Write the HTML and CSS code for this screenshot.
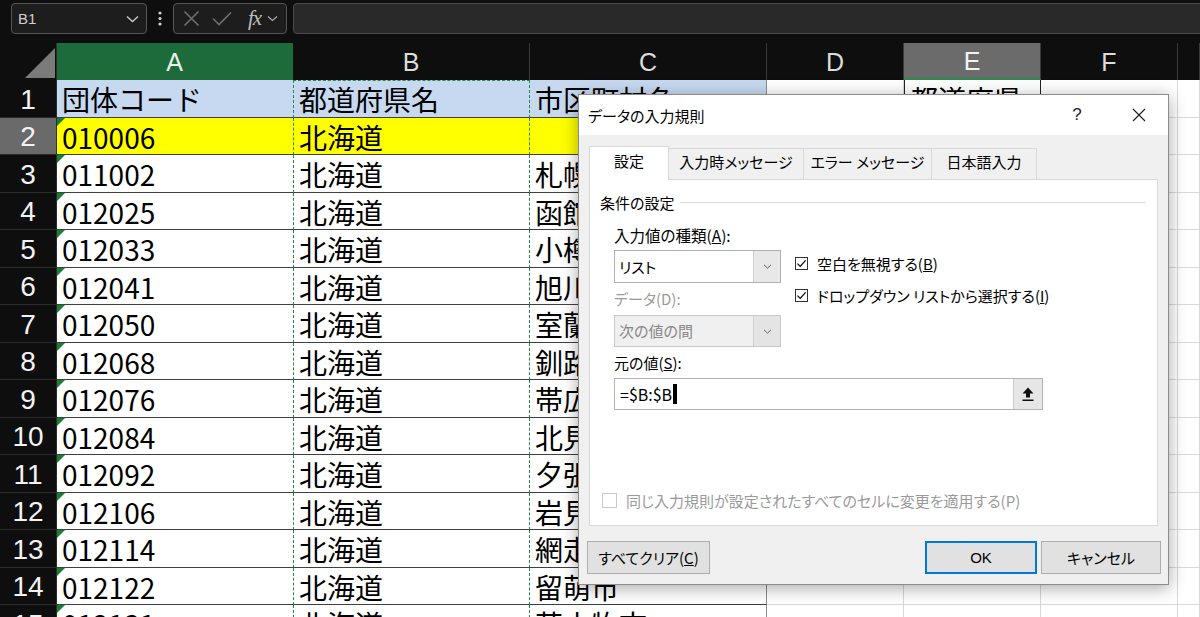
FILE: index.html
```
<!DOCTYPE html>
<html lang="ja">
<head>
<meta charset="utf-8">
<title>データの入力規則</title>
<link rel="stylesheet" href="styles.css">
</head>
<body>
<div class="topbar">
  <div class="namebox">
    <span>B1</span>
    <svg width="13" height="8" viewBox="0 0 13 8"><path d="M1 1.5 6.5 6.5 12 1.5" fill="none" stroke="#c8c8c8" stroke-width="1.4"/></svg>
  </div>
  <div class="dots"><svg width="4" height="15" viewBox="0 0 4 15"><circle cx="2" cy="2" r="1.6" fill="#cfcfcf"/><circle cx="2" cy="7.5" r="1.6" fill="#cfcfcf"/><circle cx="2" cy="13" r="1.6" fill="#cfcfcf"/></svg></div>
  <div class="fxbox">
    <svg width="17" height="17" viewBox="0 0 17 17"><path d="M1.5 1.5 15.5 15.5 M15.5 1.5 1.5 15.5" stroke="#6e6e6e" stroke-width="1.6"/></svg>
    <svg width="20" height="15" viewBox="0 0 20 15"><path d="M1 7.5 7 13.5 19 1.5" fill="none" stroke="#6e6e6e" stroke-width="1.6"/></svg>
    <span class="fx">fx</span>
    <svg width="11" height="7" viewBox="0 0 11 7"><path d="M1 1.5 5.5 5.5 10 1.5" fill="none" stroke="#a8a8a8" stroke-width="1.3"/></svg>
  </div>
  <div class="formula"></div>
</div>

<div class="sheet">
  <div class="corner"><i></i></div><div class="ch ch-a">A</div><div class="ch">B</div><div class="ch">C</div><div class="ch">D</div><div class="ch ch-e">E</div><div class="ch">F</div><div class="ch"></div>

  <div class="rh">1</div><div class="c t a blue">団体コード</div><div class="c t b blue top">都道府県名</div><div class="c t cc blue">市区町村名</div><div class="c"></div><div class="c e1">都道府県</div><div class="c"></div><div class="c"></div>
  <div class="rh on">2</div><div class="c t a yel mk">010006</div><div class="c t b yel">北海道</div><div class="c t cc yel"></div><div class="c"></div><div class="c"></div><div class="c"></div><div class="c"></div>
  <div class="rh">3</div><div class="c t a mk">011002</div><div class="c t b">北海道</div><div class="c t cc">札幌市</div><div class="c"></div><div class="c"></div><div class="c"></div><div class="c"></div>
  <div class="rh">4</div><div class="c t a mk">012025</div><div class="c t b">北海道</div><div class="c t cc">函館市</div><div class="c"></div><div class="c"></div><div class="c"></div><div class="c"></div>
  <div class="rh">5</div><div class="c t a mk">012033</div><div class="c t b">北海道</div><div class="c t cc">小樽市</div><div class="c"></div><div class="c"></div><div class="c"></div><div class="c"></div>
  <div class="rh">6</div><div class="c t a mk">012041</div><div class="c t b">北海道</div><div class="c t cc">旭川市</div><div class="c"></div><div class="c"></div><div class="c"></div><div class="c"></div>
  <div class="rh">7</div><div class="c t a mk">012050</div><div class="c t b">北海道</div><div class="c t cc">室蘭市</div><div class="c"></div><div class="c"></div><div class="c"></div><div class="c"></div>
  <div class="rh">8</div><div class="c t a mk">012068</div><div class="c t b">北海道</div><div class="c t cc">釧路市</div><div class="c"></div><div class="c"></div><div class="c"></div><div class="c"></div>
  <div class="rh">9</div><div class="c t a mk">012076</div><div class="c t b">北海道</div><div class="c t cc">帯広市</div><div class="c"></div><div class="c"></div><div class="c"></div><div class="c"></div>
  <div class="rh">10</div><div class="c t a mk">012084</div><div class="c t b">北海道</div><div class="c t cc">北見市</div><div class="c"></div><div class="c"></div><div class="c"></div><div class="c"></div>
  <div class="rh">11</div><div class="c t a mk">012092</div><div class="c t b">北海道</div><div class="c t cc">夕張市</div><div class="c"></div><div class="c"></div><div class="c"></div><div class="c"></div>
  <div class="rh">12</div><div class="c t a mk">012106</div><div class="c t b">北海道</div><div class="c t cc">岩見沢市</div><div class="c"></div><div class="c"></div><div class="c"></div><div class="c"></div>
  <div class="rh">13</div><div class="c t a mk">012114</div><div class="c t b">北海道</div><div class="c t cc">網走市</div><div class="c"></div><div class="c"></div><div class="c"></div><div class="c"></div>
  <div class="rh">14</div><div class="c t a mk">012122</div><div class="c t b">北海道</div><div class="c t cc">留萌市</div><div class="c"></div><div class="c"></div><div class="c"></div><div class="c"></div>
  <div class="rh">15</div><div class="c t a mk">012131</div><div class="c t b">北海道</div><div class="c t cc">苫小牧市</div><div class="c"></div><div class="c"></div><div class="c"></div><div class="c"></div>
</div>

<div class="dialog">
  <div class="dtitle">
    <span class="dname">データの入力規則</span>
    <span class="dhelp">?</span>
    <span class="dclose"><svg width="14" height="14" viewBox="0 0 14 14"><path d="M1 1 13 13 M13 1 1 13" stroke="#1a1a1a" stroke-width="1.1"/></svg></span>
  </div>
  <div class="tabs">
    <div class="tab on">設定</div>
    <div class="tab w1">入力時メッセージ</div>
    <div class="tab w2">エラー メッセージ</div>
    <div class="tab w3">日本語入力</div>
  </div>
  <div class="panel">
    <div class="group"><span>条件の設定</span><i></i></div>
    <div class="form">
      <div class="lbl first">入力値の種類(<u>A</u>):</div>
      <div class="pair">
        <div class="leftcol">
          <div class="select"><span>リスト</span><b><svg width="9" height="5" viewBox="0 0 9 5"><path d="M1 .8 4.5 4.2 8 .8" fill="none" stroke="#555" stroke-width="1"/></svg></b></div>
          <div class="lbl off sp">データ(D):</div>
          <div class="select dis sp2"><span>次の値の間</span><b><svg width="9" height="5" viewBox="0 0 9 5"><path d="M1 .8 4.5 4.2 8 .8" fill="none" stroke="#666" stroke-width="1"/></svg></b></div>
        </div>
        <div class="rightcol">
          <div class="chk"><span class="box"><svg width="11" height="11" viewBox="0 0 11 11"><path d="M1.5 5.6 4.2 8.4 9.6 2.4" fill="none" stroke="#000" stroke-width="1.2"/></svg></span>空白を無視する(<u>B</u>)</div>
          <div class="chk second"><span class="box"><svg width="11" height="11" viewBox="0 0 11 11"><path d="M1.5 5.6 4.2 8.4 9.6 2.4" fill="none" stroke="#000" stroke-width="1.2"/></svg></span>ドロップダウン リストから選択する(<u>I</u>)</div>
        </div>
      </div>
      <div class="lbl sp">元の値(<u>S</u>):</div>
      <div class="source">
        <span class="val">=$B:$B</span><span class="caret"></span>
        <b><svg width="14" height="16" viewBox="0 0 14 16"><path d="M7 1.5 12.5 7.5 H9 V11.5 H5 V7.5 H1.5 Z" fill="#111"/><rect x="1.5" y="13.5" width="11" height="1.5" fill="#111"/></svg></b>
      </div>
    </div>
    <div class="chk off apply"><span class="box"></span>同じ入力規則が設定されたすべてのセルに変更を適用する(P)</div>
  </div>
  <div class="footer">
    <div class="btn clear">すべてクリア(<u>C</u>)</div>
    <div class="btn ok">OK</div>
    <div class="btn cancel">キャンセル</div>
  </div>
</div>
</body>
</html>
```

FILE: styles.css
```
html,body{margin:0;padding:0;}
body{width:1200px;height:617px;overflow:hidden;position:relative;background:#0e0e0e;font-family:"Noto Sans CJK JP","Liberation Sans",sans-serif;}

/* formula bar */
.topbar{height:43px;box-sizing:border-box;padding-top:3px;display:flex;align-items:flex-start;}
.namebox{margin-left:11px;width:136px;height:31px;box-sizing:border-box;border:1px solid #555;border-radius:4px;background:#1d1d1d;display:flex;align-items:center;justify-content:space-between;padding:0 7px 0 6px;}
.namebox span{font:15px "Liberation Sans",sans-serif;color:#cfcfcf;}
.dots{width:26px;height:31px;display:flex;align-items:center;justify-content:center;}
.fxbox{width:114px;height:31px;box-sizing:border-box;border:1px solid #555;border-radius:4px;background:#1d1d1d;display:flex;align-items:center;padding-left:9px;}
.fxbox svg:nth-child(2){margin-left:12px;}
.fx{margin-left:16px;font:italic 21px "Liberation Serif",serif;color:#bdbdbd;letter-spacing:-1px;line-height:1;}
.fxbox svg:last-child{margin-left:6px;}
.formula{margin-left:6px;flex:1;margin-right:-10px;height:31px;box-sizing:border-box;border:1px solid #4a4a4a;border-radius:4px;background:#292929;}

/* sheet */
.sheet{display:grid;grid-template-columns:57px 236px 237px 237px 137px 137px 137px 1fr;grid-template-rows:37px;grid-auto-rows:37.5px;}
.corner{background:#0e0e0e;border-right:1px solid #2e2e2e;position:relative;}
.corner i{position:absolute;left:25px;top:5px;width:30px;height:30px;background:#7b7b7b;clip-path:polygon(100% 0,100% 100%,0 100%);}
.ch{background:#0e0e0e;color:#dcdcdc;font:25px "Liberation Sans",sans-serif;display:flex;align-items:center;justify-content:center;border-right:1px solid #3a3a3a;padding-top:2px;box-sizing:border-box;}
.ch-a{background:#1d6b3b;color:#e6f3e8;border-right-color:#1d6b3b;}
.ch-e{background:#6b6b6b;color:#f2f2f2;border-bottom:2px solid #2a8a4f;}
.rh{background:#0e0e0e;color:#f2f2f2;font:28px "Liberation Sans",sans-serif;display:flex;align-items:center;justify-content:center;border-bottom:1px solid #2c2c2c;border-right:1px solid #2c2c2c;padding-top:3px;box-sizing:border-box;}
.rh.on{background:#6a6a6a;}

.c{background:#fff;border-right:1px solid #d9d9d9;border-bottom:1px solid #d9d9d9;padding:1px 0 0 5px;font-size:28px;line-height:36px;white-space:nowrap;overflow:hidden;position:relative;color:#000;}
.t{border-bottom-color:#404040;}
.a{border-right:none;}
.b{border-left:1px dashed #23894a;border-right:1px dashed #23894a;}
.b.top{border-top:1px dashed #23894a;padding-top:0;}
.cc{border-right-color:#8c8c8c;}
.blue{background:#c6d9f0;}
.yel{background:#ffff00;}
.mk::before{content:"";position:absolute;top:0;left:0;border-top:8px solid #1b7d34;border-right:8px solid transparent;}
.e1{border:1px solid #222;border-top:none;}

/* dialog */
.dialog{position:absolute;left:578px;top:94px;width:591px;height:491px;box-sizing:border-box;border:1px solid #8c8c8c;background:#f0f0f0;box-shadow:0 3px 16px rgba(0,0,0,.35);display:flex;flex-direction:column;font-size:15px;color:#000;font-feature-settings:"palt";}
.dtitle{height:40px;flex:none;background:#fff;display:flex;align-items:center;padding-left:9px;}
.dname{flex:1;font-size:15px;}
.dhelp{width:46px;text-align:center;font:17px "Liberation Sans",sans-serif;color:#222;}
.dclose{width:46px;margin:0 6px 0 16px;display:flex;justify-content:center;}
.tabs{margin:11px 0 0 10px;height:33px;flex:none;display:flex;align-items:flex-end;position:relative;z-index:1;}
.tab{height:31px;box-sizing:border-box;border:1px solid #d9d9d9;border-bottom:none;margin-left:-1px;background:#f0f0f0;display:flex;align-items:center;justify-content:center;font-size:15px;padding-bottom:5px;}
.tab.on{height:34px;width:80px;margin-left:0;background:#fff;margin-bottom:-1px;padding-bottom:7px;}
.w1{width:136px;}
.w2{width:129px;}
.w3{width:106px;}
.panel{margin-left:10px;width:569px;height:347px;flex:none;box-sizing:border-box;border:1px solid #d9d9d9;background:#fff;display:flex;flex-direction:column;}
.group{margin-top:12px;height:20px;display:flex;align-items:center;padding:0 11px 0 10px;}
.group i{flex:1;height:1px;background:#dcdcdc;margin-left:6px;}
.form{padding-left:24px;}
.lbl{height:20px;line-height:20px;}
.lbl.first{margin-top:13px;font-size:15.5px;}
.lbl.sp{margin-top:6px;}
.off{color:#9a9a9a;}
.pair{display:flex;margin-top:5px;}
.leftcol{width:167px;}
.select{height:33px;box-sizing:border-box;border:1px solid #b0b0b0;background:#fff;display:flex;}
.select span{flex:1;padding-left:4px;line-height:31px;}
.select b{width:26px;background:#e8e8e8;border-left:1px solid #cfcfcf;display:flex;align-items:center;justify-content:center;}
.select.dis{height:32px;background:#f0f0f0;border-color:#c8c8c8;color:#888;}
.select.dis span{line-height:30px;}
.select.dis b{background:#e4e4e4;}
.sp2{margin-top:6px;}
.rightcol{margin-left:14px;padding-top:3px;}
.chk{height:20px;display:flex;align-items:center;white-space:nowrap;}
.chk.second{margin-top:12px;}
.box{width:13px;height:13px;box-sizing:border-box;border:1px solid #333;background:#fff;margin-right:9px;display:flex;align-items:center;justify-content:center;}
.box svg{display:block;}
.source{margin-top:5px;width:429px;height:32px;box-sizing:border-box;border:1px solid #b4b4b4;background:#fff;display:flex;align-items:center;}
.val{padding-left:5px;font-size:16px;font-feature-settings:normal;}
.caret{width:4px;height:20px;background:#000;margin-left:1px;}
.source b{margin-left:auto;width:28px;height:30px;background:#e6e6e6;border-left:1px solid #cdcdcd;display:flex;align-items:center;justify-content:center;}
.apply{margin-top:auto;margin-bottom:15px;padding-left:12px;}
.apply .box{border-color:#cacaca;width:15px;height:15px;}
.footer{margin-top:15px;height:33px;flex:none;display:flex;padding:0 7px 0 8px;}
.btn{height:33px;box-sizing:border-box;border:1px solid #adadad;background:#e1e1e1;display:flex;align-items:center;justify-content:center;font-size:15px;}
.clear{width:123px;}
.ok{width:112px;margin-left:auto;border-color:#0078d7;box-shadow:inset 0 0 0 1px #0078d7;font-family:"Liberation Sans",sans-serif;}
.cancel{width:120px;margin-left:4px;}
```
